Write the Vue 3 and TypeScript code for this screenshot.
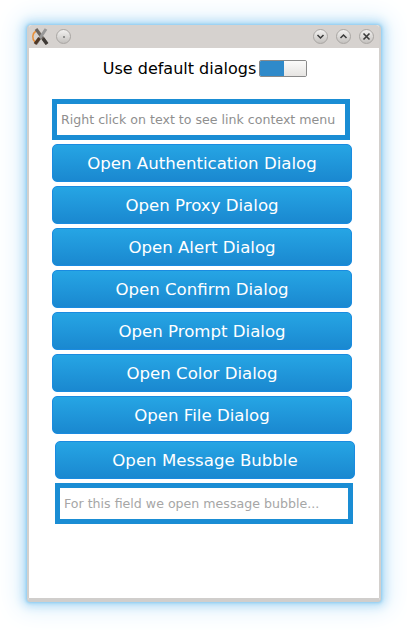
<script setup lang="ts">
const buttons: string[] = [
  'Open Authentication Dialog',
  'Open Proxy Dialog',
  'Open Alert Dialog',
  'Open Confirm Dialog',
  'Open Prompt Dialog',
  'Open Color Dialog',
  'Open File Dialog',
]
</script>

<template>
  <div class="desktop">
    <div class="window">
      <header class="titlebar">
        <svg class="app-icon" width="20" height="18" viewBox="0 0 20 18">
          <path d="M5 3 A7 7 0 0 0 4 14" fill="none" stroke="#e8903a" stroke-width="1.5" />
          <path d="M5 1 L16 16" stroke="#6b645d" stroke-width="3.2" />
          <path d="M15 1 L5 16" stroke="#989898" stroke-width="3" />
          <path d="M4 16 L8.5 10" stroke="#4f3826" stroke-width="3.2" />
          <path d="M16 16 L12 10.5" stroke="#3f3a36" stroke-width="3.2" />
        </svg>
        <span class="wm-btn pin"><i class="dot"></i></span>
        <span class="spacer"></span>
        <span class="wm-btn small">
          <svg width="9" height="9" viewBox="0 0 9 9"><path d="M1.5 3 L4.5 6 L7.5 3" fill="none" stroke="#3a3a3a" stroke-width="1.5" /></svg>
        </span>
        <span class="wm-btn small">
          <svg width="9" height="9" viewBox="0 0 9 9"><path d="M1.5 6 L4.5 3 L7.5 6" fill="none" stroke="#3a3a3a" stroke-width="1.5" /></svg>
        </span>
        <span class="wm-btn small">
          <svg width="9" height="9" viewBox="0 0 9 9"><path d="M1.5 1.5 L7.5 7.5 M7.5 1.5 L1.5 7.5" fill="none" stroke="#3a3a3a" stroke-width="1.6" /></svg>
        </span>
      </header>

      <main class="content">
        <div class="toggle-row">
          <span>Use default dialogs</span>
          <span class="switch"><span class="on"></span><span class="off"></span></span>
        </div>

        <div class="field first">Right click on text to see link context menu</div>

        <div class="stack">
          <button v-for="b in buttons" :key="b" class="btn">{{ b }}</button>
        </div>

        <div class="bubble-group">
          <button class="btn">Open Message Bubble</button>
          <div class="field second">For this field we open message bubble...</div>
        </div>
      </main>
    </div>
  </div>
</template>

<style scoped>
.desktop {
  width: 407px;
  height: 630px;
  padding: 25px 26px 28px 27px;
  box-sizing: border-box;
  background: #fff;
  overflow: hidden;
  font-family: "DejaVu Sans", sans-serif;
}
.window {
  width: 354px;
  height: 577px;
  box-sizing: border-box;
  display: flex;
  flex-direction: column;
  background: #fff;
  border-radius: 4px 4px 3px 3px;
  border-left: 2px solid #d3d0cd;
  border-right: 2px solid #d3d0cd;
  border-bottom: 4px solid #d0cecc;
  box-shadow: 0 0 3px 1px #8ccbf0, 0 0 10px 4px #b4ddf6, 0 0 24px 9px #e2f2fc;
}
.titlebar {
  height: 23px;
  flex: none;
  display: flex;
  align-items: center;
  gap: 7px;
  padding: 0 5px 0 2px;
  background: #d6d2cf;
  border-radius: 3px 3px 0 0;
}
.app-icon {
  flex: none;
}
.spacer {
  flex: 1;
}
.wm-btn {
  width: 15px;
  height: 15px;
  flex: none;
  display: flex;
  align-items: center;
  justify-content: center;
  border-radius: 50%;
  border: 1px solid #a9a6a3;
  box-sizing: border-box;
  background: linear-gradient(#f2f1f0, #c4c1be);
}
.wm-btn.pin {
  margin-left: -2px;
}
.wm-btn.small {
  margin-left: 1px;
}
.dot {
  width: 2px;
  height: 2px;
  border-radius: 50%;
  background: #777;
}
.content {
  flex: 1;
  padding: 10px 0 0 23px;
  color: #000;
}
.toggle-row {
  height: 20px;
  width: 300px;
  display: flex;
  align-items: center;
  justify-content: center;
  gap: 3px;
  font-size: 16px;
  margin-left: 3px;
  white-space: nowrap;
}
.switch {
  width: 48px;
  height: 17px;
  display: flex;
  box-sizing: border-box;
  border: 1px solid #8a8a8a;
  border-radius: 2px;
  overflow: hidden;
}
.on {
  width: 24px;
  background: #2f8aca;
}
.off {
  flex: 1;
  background: linear-gradient(#fbfbfa, #e6e4e2);
}
.field {
  box-sizing: border-box;
  border: 5px solid #1a8dd4;
  background: #fff;
  color: #8f8f8f;
  font-size: 12.6px;
  padding-left: 4px;
  display: flex;
  align-items: center;
  white-space: nowrap;
}
.field.first {
  width: 298px;
  height: 41px;
  margin-top: 21px;
}
.field.second {
  width: 298px;
  height: 41px;
  margin-top: 4px;
  color: #a6a6a6;
}
.stack {
  display: flex;
  flex-direction: column;
  gap: 4px;
  margin-top: 4px;
}
.bubble-group {
  margin: 7px 0 0 3px;
}
.btn {
  display: block;
  width: 300px;
  height: 38px;
  padding: 0;
  box-sizing: border-box;
  border: 1px solid #1a8be0;
  border-radius: 5px;
  background: linear-gradient(#26a5e4, #1a88d0);
  color: #fff;
  font-family: "DejaVu Sans", sans-serif;
  font-size: 16.6px;
  white-space: nowrap;
}
</style>
